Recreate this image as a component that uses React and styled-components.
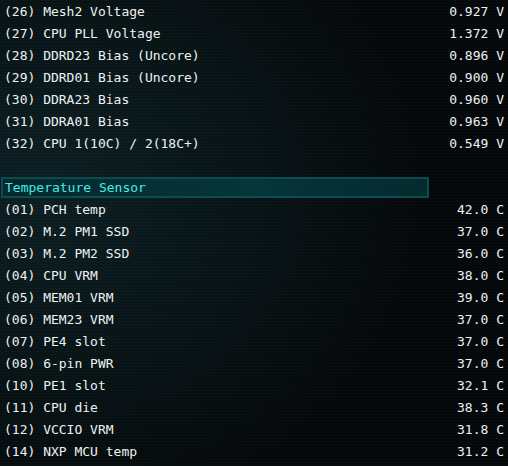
import React from 'react';
import styled, { createGlobalStyle } from "styled-components";

const GlobalStyle = createGlobalStyle`
  html, body {
    margin: 0;
    padding: 0;
    background: #060b0d;
  }
`;

const Screen = styled.div`
    width: 508px;
    height: 466px;
    overflow: hidden;
    box-sizing: border-box;
    padding: 0 4px 0 4px;
    font-family: "DejaVu Sans Mono", "Liberation Mono", monospace;
    font-size: 13px;
    color: #eef2f2;
    background:
      repeating-linear-gradient(180deg, rgba(255,255,255,0.012) 0px, rgba(255,255,255,0.012) 1px, rgba(0,0,0,0.07) 1px, rgba(0,0,0,0.07) 3px),
      radial-gradient(ellipse 380px 330px at 40px 190px, #0d2125 0%, #09171a 45%, #05090b 100%);
`;

const Row = styled.div`
    display: flex;
    justify-content: space-between;
    align-items: center;
    height: 22px;
    white-space: pre;
`;

const Label = styled.span``;

const Value = styled.span``;

const Spacer = styled.div`
    height: 22px;
`;

const Header = styled.div`
    height: 22px;
    display: flex;
    align-items: center;
    margin-left: -4px;
`;

const HeaderBox = styled.div`
    width: 428px;
    height: 21px;
    margin-left: 1px;
    box-sizing: border-box;
    border: 2px solid #0a4c50;
    background: linear-gradient(90deg, #05282c 0%, #06353a 60%, #052a2e 100%);
    color: #44ecea;
    padding-left: 2px;
    display: flex;
    align-items: center;
    margin-top: 1px;
`;

const voltages = [
  ["(26) Mesh2 Voltage", "0.927 V"],
  ["(27) CPU PLL Voltage", "1.372 V"],
  ["(28) DDRD23 Bias (Uncore)", "0.896 V"],
  ["(29) DDRD01 Bias (Uncore)", "0.900 V"],
  ["(30) DDRA23 Bias", "0.960 V"],
  ["(31) DDRA01 Bias", "0.963 V"],
  ["(32) CPU 1(10C) / 2(18C+)", "0.549 V"],
];

const temps = [
  ["(01) PCH temp", "42.0 C"],
  ["(02) M.2 PM1 SSD", "37.0 C"],
  ["(03) M.2 PM2 SSD", "36.0 C"],
  ["(04) CPU VRM", "38.0 C"],
  ["(05) MEM01 VRM", "39.0 C"],
  ["(06) MEM23 VRM", "37.0 C"],
  ["(07) PE4 slot", "37.0 C"],
  ["(08) 6-pin PWR", "37.0 C"],
  ["(10) PE1 slot", "32.1 C"],
  ["(11) CPU die", "38.3 C"],
  ["(12) VCCIO VRM", "31.8 C"],
  ["(14) NXP MCU temp", "31.2 C"],
];

const SensorRow = ({name, value}) => (
  <Row>
    <Label>{name}</Label>
    <Value>{value}</Value>
  </Row>
);

export default function App() {
  return (
    <>
      <GlobalStyle />
      <Screen>
        {voltages.map(([n, v]) => <SensorRow key={n} name={n} value={v} />)}
        <Spacer />
        <Header>
          <HeaderBox>Temperature Sensor</HeaderBox>
        </Header>
        {temps.map(([n, v]) => <SensorRow key={n} name={n} value={v} />)}
      </Screen>
    </>
  );
}
